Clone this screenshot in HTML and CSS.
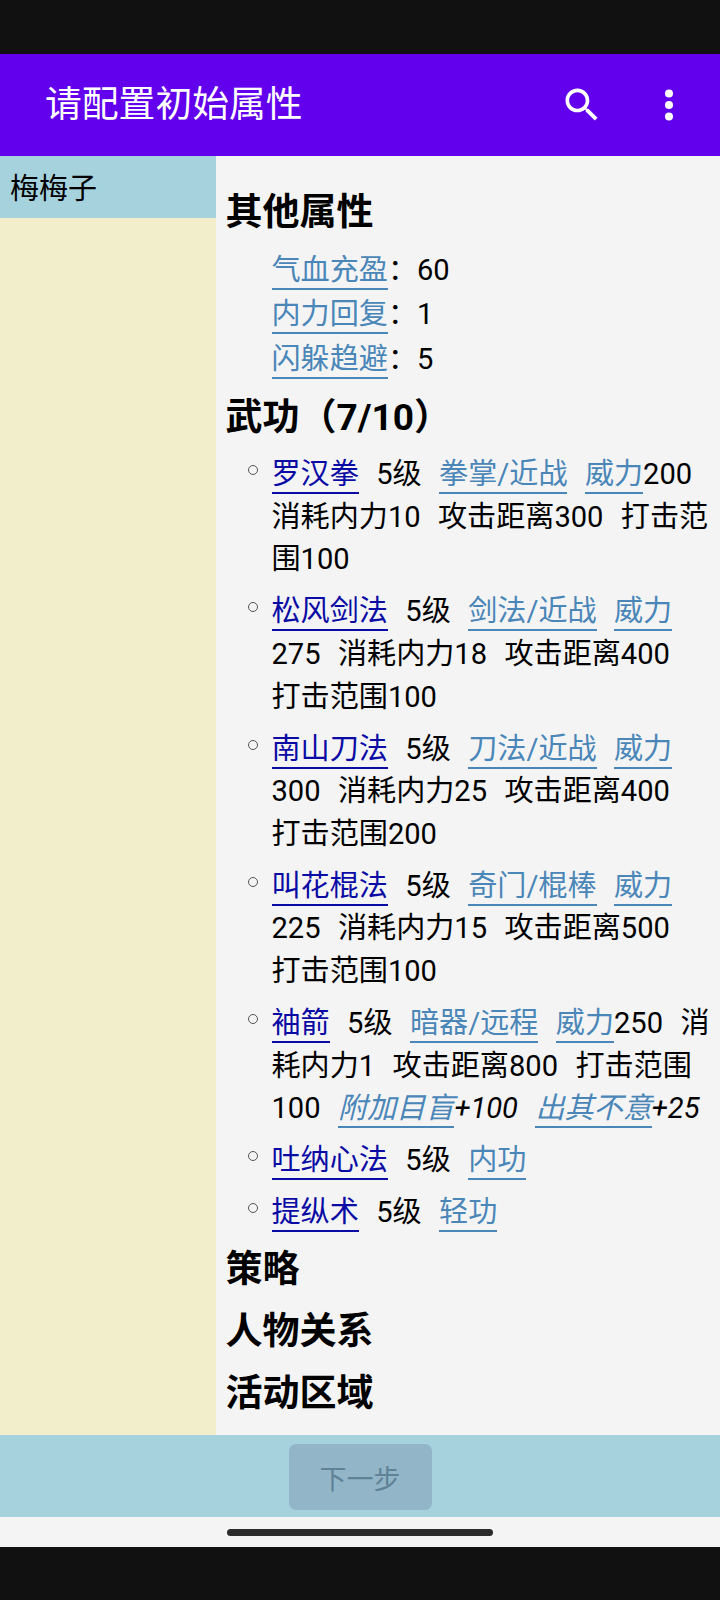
FILE: index.html
```html
<!DOCTYPE html>
<html lang="zh">
<head>
<meta charset="utf-8">
<title>请配置初始属性</title>
<link rel="stylesheet" href="styles.css">
</head>
<body>
<div class="screen">
  <div class="blackbar-top"></div>
  <header class="appbar">
    <div class="appbar-title">请配置初始属性</div>
    <svg class="appbar-icon" viewBox="0 0 24 24"><path d="M15.5 14h-.79l-.28-.27C15.41 12.59 16 11.11 16 9.5 16 5.91 13.09 3 9.5 3S3 5.91 3 9.5 5.91 16 9.5 16c1.61 0 3.09-.59 4.23-1.57l.27.28v.79l5 4.99L20.49 19l-4.99-5zm-6 0C7.01 14 5 11.99 5 9.5S7.01 5 9.5 5 14 7.01 14 9.5 11.99 14 9.5 14z"/></svg>
    <svg class="appbar-icon" viewBox="0 0 24 24"><circle cx="12" cy="5.7" r="2.2"/><circle cx="12" cy="12" r="2.2"/><circle cx="12" cy="18.3" r="2.2"/></svg>
  </header>
  <main class="main">
    <aside class="sidebar">
      <div class="side-item">梅梅子</div>
    </aside>
    <section class="content">
      <h3 class="heading">其他属性</h3>
      <ul class="attrs">
        <li><a class="tag">气血充盈</a>：60</li>
        <li><a class="tag">内力回复</a>：1</li>
        <li><a class="tag">闪躲趋避</a>：5</li>
      </ul>
      <h3 class="heading">武功（7/10）</h3>
      <ul class="skills">
        <li><a class="name">罗汉拳</a>&nbsp; 5级&nbsp; <a class="tag">拳掌/近战</a>&nbsp; <a class="tag">威力</a>200&nbsp; 消耗内力10&nbsp; 攻击距离300&nbsp; 打击范围100</li>
        <li><a class="name">松风剑法</a>&nbsp; 5级&nbsp; <a class="tag">剑法/近战</a>&nbsp; <a class="tag">威力</a>275&nbsp; 消耗内力18&nbsp; 攻击距离400&nbsp; 打击范围100</li>
        <li><a class="name">南山刀法</a>&nbsp; 5级&nbsp; <a class="tag">刀法/近战</a>&nbsp; <a class="tag">威力</a>300&nbsp; 消耗内力25&nbsp; 攻击距离400&nbsp; 打击范围200</li>
        <li><a class="name">叫花棍法</a>&nbsp; 5级&nbsp; <a class="tag">奇门/棍棒</a>&nbsp; <a class="tag">威力</a>225&nbsp; 消耗内力15&nbsp; 攻击距离500&nbsp; 打击范围100</li>
        <li><a class="name">袖箭</a>&nbsp; 5级&nbsp; <a class="tag">暗器/远程</a>&nbsp; <a class="tag">威力</a>250&nbsp; 消耗内力1&nbsp; 攻击距离800&nbsp; 打击范围100&nbsp; <em><a class="tag">附加目盲</a>+100</em>&nbsp; <em><a class="tag">出其不意</a>+25</em></li>
        <li><a class="name">吐纳心法</a>&nbsp; 5级&nbsp; <a class="tag">内功</a></li>
        <li><a class="name">提纵术</a>&nbsp; 5级&nbsp; <a class="tag">轻功</a></li>
      </ul>
      <h3 class="heading">策略</h3>
      <h3 class="heading">人物关系</h3>
      <h3 class="heading">活动区域</h3>
    </section>
  </main>
  <footer class="footer">
    <button class="next" type="button">下一步</button>
  </footer>
  <div class="navbar"><div class="handle"></div></div>
  <div class="blackbar-bottom"></div>
</div>
</body>
</html>
```
FILE: styles.css
```css
html, body {
  margin: 0;
  padding: 0;
}
body {
  font-family: Roboto, "Noto Sans CJK SC", sans-serif;
  color: #000;
}
.screen {
  width: 720px;
  height: 1600px;
  display: flex;
  flex-direction: column;
  overflow: hidden;
  background: #f4f4f4;
}
.blackbar-top {
  height: 54px;
  background: #111;
  flex: none;
}
.appbar {
  height: 102px;
  flex: none;
  background: #6200ee;
  display: flex;
  align-items: center;
  gap: 43px;
  padding: 0 29px 0 45px;
}
.appbar-title {
  flex: 1;
  color: #fff;
  font-size: 36.8px;
  line-height: 44px;
  padding-bottom: 1px;
}
.appbar-icon {
  width: 44px;
  height: 44px;
  fill: #fff;
  flex: none;
}
.main {
  height: 1279px;
  flex: none;
  display: flex;
}
.sidebar {
  width: 216px;
  flex: none;
  background: #f2eecb;
}
.side-item {
  height: 62px;
  padding-left: 10px;
  background: #a6d2de;
  font-size: 29px;
  line-height: 66px;
}
.content {
  flex: 1;
  min-width: 0;
  padding: 29px 8px 0 9.5px;
  overflow: hidden;
}
.heading {
  margin: 0 0 7px;
  font-size: 37px;
  line-height: 55px;
  font-weight: 700;
}
.attrs,
.skills {
  margin: 0;
  padding: 0 0 0 46px;
  font-size: 29.1px;
  word-spacing: 1.5px;
}
.attrs {
  list-style: none;
  line-height: 44.4px;
  margin-top: 8px;
  margin-bottom: 9px;
}
.skills {
  list-style: none;
  line-height: 42.6px;
  margin-top: 8px;
}
.skills li {
  position: relative;
  margin-bottom: 9.4px;
}
.skills li::before {
  content: "";
  position: absolute;
  left: -24px;
  top: 12px;
  width: 8px;
  height: 8px;
  border: 1.5px solid #555;
  border-radius: 50%;
}
.skills + .heading {
  margin-top: -1px;
}
.tag,
.name {
  padding-bottom: 1px;
  border-bottom: 2px solid;
}
.tag {
  color: #4a86b8;
}
.name {
  color: #0a0aa5;
}
.footer {
  height: 82px;
  flex: none;
  background: #a6d2de;
  display: flex;
  align-items: flex-start;
  justify-content: center;
  padding-top: 9px;
  box-sizing: border-box;
}
.next {
  width: 143px;
  height: 66px;
  border: 0;
  border-radius: 7px;
  background: #93b5c8;
  color: #5f8296;
  font-family: inherit;
  font-size: 27px;
  padding: 0;
}
.navbar {
  height: 30px;
  flex: none;
  background: #f4f4f4;
  display: flex;
  justify-content: center;
  padding-top: 12px;
  box-sizing: border-box;
}
.handle {
  width: 266px;
  height: 7px;
  border-radius: 4px;
  background: #2b2b2b;
}
.blackbar-bottom {
  flex: 1;
  background: #111;
}
```
